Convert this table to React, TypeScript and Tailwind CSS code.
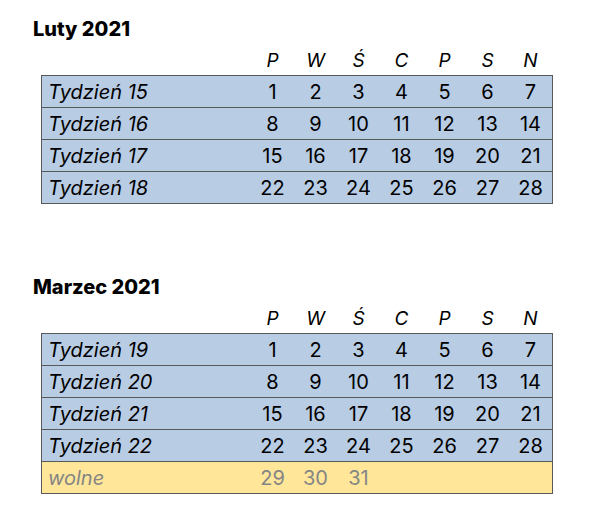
const days = ["P", "W", "Ś", "C", "P", "S", "N"];

type Row = { label: string; nums: (number | null)[]; off?: boolean };

const months: { title: string; rows: Row[] }[] = [
  {
    title: "Luty 2021",
    rows: [
      { label: "Tydzień 15", nums: [1, 2, 3, 4, 5, 6, 7] },
      { label: "Tydzień 16", nums: [8, 9, 10, 11, 12, 13, 14] },
      { label: "Tydzień 17", nums: [15, 16, 17, 18, 19, 20, 21] },
      { label: "Tydzień 18", nums: [22, 23, 24, 25, 26, 27, 28] },
    ],
  },
  {
    title: "Marzec 2021",
    rows: [
      { label: "Tydzień 19", nums: [1, 2, 3, 4, 5, 6, 7] },
      { label: "Tydzień 20", nums: [8, 9, 10, 11, 12, 13, 14] },
      { label: "Tydzień 21", nums: [15, 16, 17, 18, 19, 20, 21] },
      { label: "Tydzień 22", nums: [22, 23, 24, 25, 26, 27, 28] },
      { label: "wolne", nums: [29, 30, 31, null, null, null, null], off: true },
    ],
  },
];

function Month({ title, rows }: { title: string; rows: Row[] }) {
  return (
    <div>
      <h2 className="pl-[33px] pt-[2px] text-[20px] font-extrabold leading-[26px] text-black">{title}</h2>
      <div className="ml-[41px] w-[512px] px-[1px]">
        <div className="grid h-[33px] grid-cols-[209px_repeat(7,43px)] items-end pb-[2px]">
          <div />
          {days.map((d, i) => (
            <div key={i} className="text-center text-[19px] italic leading-[24px] text-black">
              {d}
            </div>
          ))}
        </div>
      </div>
      <div className="ml-[41px] w-[512px] border-x border-t border-[#595959]">
        {rows.map((r) => (
          <div
            key={r.label}
            className={`grid h-[32px] grid-cols-[209px_repeat(7,43px)] items-center border-b border-[#595959] ${
              r.off ? "bg-[#ffe699] text-[#858585]" : "bg-[#b8cce4] text-black"
            }`}
          >
            <div className="pl-[6px] text-[20px] italic leading-[24px]">{r.label}</div>
            {r.nums.map((n, i) => (
              <div key={i} className="text-center text-[20px] leading-[24px]">
                {n ?? ""}
              </div>
            ))}
          </div>
        ))}
      </div>
    </div>
  );
}

export default function App() {
  return (
    <div className="h-[511px] w-[592px] bg-white pt-[14px] font-['Inter',sans-serif]">
      <Month {...months[0]} />
      <div className="h-[68px]" />
      <Month {...months[1]} />
    </div>
  );
}
